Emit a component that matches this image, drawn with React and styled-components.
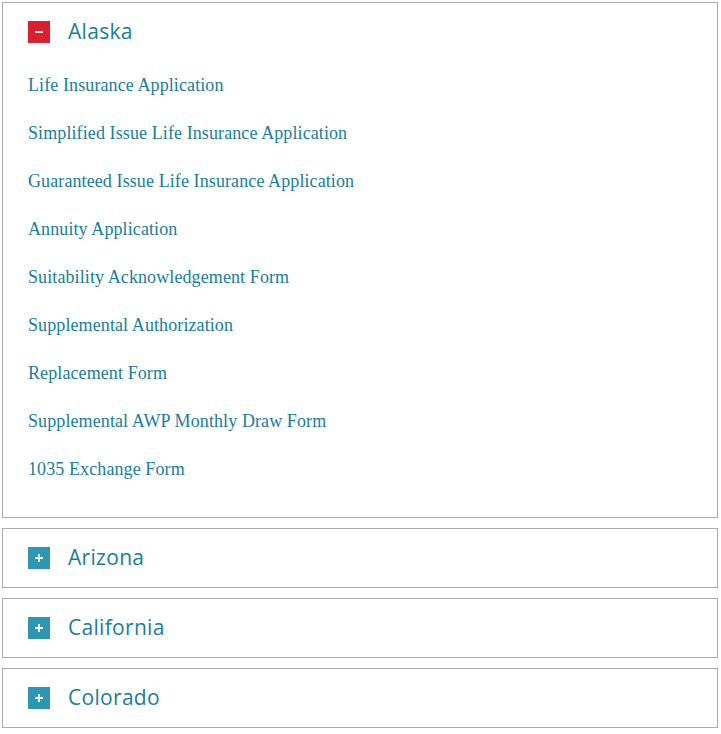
import React, { useState } from 'react';
import styled, { createGlobalStyle } from 'styled-components';

const GlobalStyle = createGlobalStyle`
  body {
    margin: 0;
    background: #fff;
  }
`;

const Page = styled.div`
  padding: 2px 3px 2px 2px;
  display: flex;
  flex-direction: column;
  gap: 10px;
`;

const Panel = styled.div`
  border: 1px solid #aaaaaa;
  padding-bottom: ${({ open }) => (open ? '24px' : '0')};
`;

const Header = styled.button`
  display: flex;
  align-items: center;
  gap: 18px;
  width: 100%;
  height: 58px;
  padding: 0 0 0 25px;
  border: none;
  background: transparent;
  cursor: pointer;
  text-align: left;
`;

const Toggle = styled.span`
  width: 22px;
  height: 22px;
  flex: none;
  display: flex;
  align-items: center;
  justify-content: center;
  background: ${({ open }) => (open ? '#d9202e' : '#2e96b0')};
`;

const Title = styled.span`
  font-family: 'Open Sans', sans-serif;
  font-size: 21px;
  color: #1a7d9a;
  letter-spacing: 0.3px;
  margin-top: -2px;
`;

const LinkList = styled.ul`
  list-style: none;
  margin: 0;
  padding: 0 0 0 25px;
`;

const LinkItem = styled.li`
  height: 48px;
  line-height: 48px;
`;

const DocLink = styled.a`
  font-family: 'Liberation Serif', serif;
  font-size: 18px;
  letter-spacing: 0.1px;
  color: #1a7d9a;
  text-decoration: none;
`;

const ToggleIcon = ({ open }) => (
  <svg width="10" height="10" viewBox="0 0 10 10">
    <rect x="1" y="4.1" width="8" height="1.8" fill="#fff" />
    {!open && <rect x="4.1" y="1" width="1.8" height="8" fill="#fff" />}
  </svg>
);

const states = [
  {
    name: 'Alaska',
    forms: [
      'Life Insurance Application',
      'Simplified Issue Life Insurance Application',
      'Guaranteed Issue Life Insurance Application',
      'Annuity Application',
      'Suitability Acknowledgement Form',
      'Supplemental Authorization',
      'Replacement Form',
      'Supplemental AWP Monthly Draw Form',
      '1035 Exchange Form',
    ],
  },
  { name: 'Arizona', forms: [] },
  { name: 'California', forms: [] },
  { name: 'Colorado', forms: [] },
];

const StatePanel = ({ state, open, onToggle }) => (
  <Panel open={open}>
    <Header onClick={onToggle}>
      <Toggle open={open}>
        <ToggleIcon open={open} />
      </Toggle>
      <Title>{state.name}</Title>
    </Header>
    {open && (
      <LinkList>
        {state.forms.map((form) => (
          <LinkItem key={form}>
            <DocLink href="#">{form}</DocLink>
          </LinkItem>
        ))}
      </LinkList>
    )}
  </Panel>
);

const App = () => {
  const [openName, setOpenName] = useState('Alaska');

  return (
    <>
      <GlobalStyle />
      <Page>
        {states.map((state) => (
          <StatePanel
            key={state.name}
            state={state}
            open={openName === state.name}
            onToggle={() =>
              setOpenName(openName === state.name ? null : state.name)
            }
          />
        ))}
      </Page>
    </>
  );
};

export default App;
